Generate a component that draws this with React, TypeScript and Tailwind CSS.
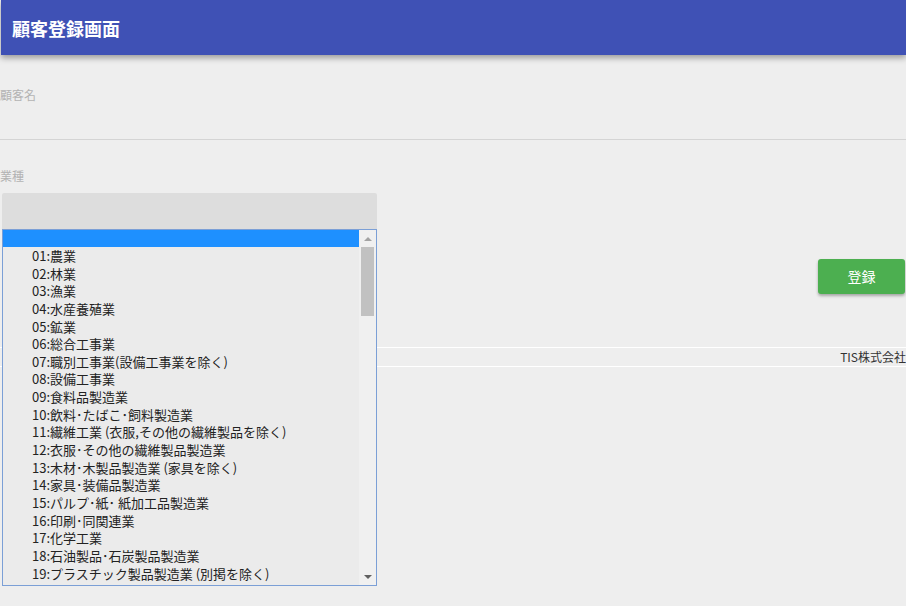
import React from 'react';

const industries = [
  '01:農業',
  '02:林業',
  '03:漁業',
  '04:水産養殖業',
  '05:鉱業',
  '06:総合工事業',
  '07:職別工事業(設備工事業を除く)',
  '08:設備工事業',
  '09:食料品製造業',
  '10:飲料･たばこ･飼料製造業',
  '11:繊維工業 (衣服,その他の繊維製品を除く)',
  '12:衣服･その他の繊維製品製造業',
  '13:木材･木製品製造業 (家具を除く)',
  '14:家具･装備品製造業',
  '15:パルプ･紙･ 紙加工品製造業',
  '16:印刷･同関連業',
  '17:化学工業',
  '18:石油製品･石炭製品製造業',
  '19:プラスチック製品製造業 (別掲を除く)',
];

const jp = { fontFamily: '"Noto Sans CJK JP", "Liberation Sans", sans-serif' };

function IndustryList() {
  return (
    <div className="absolute left-[2px] top-[229px] flex h-[357px] w-[375px] border border-[#7b9fd6] bg-[#ebebeb]">
      <ul className="flex-1 overflow-hidden">
        <li className="h-[17px] bg-[#1e90ff]" />
        {industries.map((name) => (
          <li key={name} className="h-[17.65px] whitespace-nowrap pl-[29px] text-[13px] leading-[17.65px] text-[#222]">
            {name}
          </li>
        ))}
      </ul>
      {/* scrollbar */}
      <div className="relative flex w-[17px] flex-col items-center bg-[#f0f0f0]">
        <div className="mt-[7px] h-0 w-0 border-x-[4px] border-b-[4px] border-x-transparent border-b-[#a3a3a3]" />
        <div className="mt-[6px] h-[69px] w-[13px] bg-[#c1c1c1]" />
        <div className="absolute bottom-[6px] h-0 w-0 border-x-[4px] border-t-[4px] border-x-transparent border-t-[#606060]" />
      </div>
    </div>
  );
}

export default function App() {
  return (
    <div className="relative h-[606px] w-[906px] overflow-hidden bg-[#eeeeee]" style={jp}>
      <header className="relative z-10 ml-[1px] flex h-[55px] items-center bg-[#3f51b5] pl-[11px] shadow-[0_3px_6px_rgba(0,0,0,0.35)]">
        <h1 className="text-[18px] font-bold leading-none text-white">顧客登録画面</h1>
      </header>

      <main>
        <div className="pt-[32px]">
          <label className="block text-[12px] leading-[16px] text-[#b3b3b3]">顧客名</label>
          <div className="h-[37px] border-b border-[#d4d4d4]" />
        </div>

        <div className="pt-[28px]">
          <label className="block text-[12px] leading-[16px] text-[#b3b3b3]">業種</label>
          <div className="ml-[2px] mt-[9px] h-[36px] w-[375px] rounded-t-[2px] bg-[#dddddd]" />
        </div>

        <div className="mt-[30px] flex justify-end pr-[1px]">
          <button className="h-[35px] w-[87px] rounded-[3px] bg-[#4caf50] text-[14px] text-white shadow-[0_2px_3px_rgba(0,0,0,0.3)]">
            登録
          </button>
        </div>
      </main>

      <footer className="mt-[53px] flex h-[20px] items-center justify-end border-y border-white">
        <span className="whitespace-nowrap text-[12px] text-[#333]">TIS株式会社</span>
      </footer>

      <IndustryList />
    </div>
  );
}
